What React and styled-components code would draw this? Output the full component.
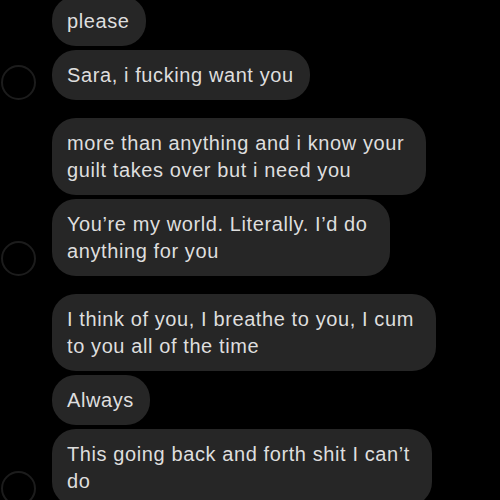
import React from "react";
import styled, { createGlobalStyle } from "styled-components";

const GlobalStyle = createGlobalStyle`
  html, body {
    margin: 0;
    padding: 0;
    background: #000;
    overflow: hidden;
  }
`;

const Thread = styled.div`
  width: 500px;
  height: 500px;
  overflow: hidden;
  background: #000;
  font-family: "Liberation Sans", Arial, sans-serif;
`;

const Inner = styled.div`
  margin-top: -4px;
  display: flex;
  flex-direction: column;
  gap: 18px;
`;

const Group = styled.div`
  display: flex;
  flex-direction: row;
  align-items: flex-end;
  gap: 16px;
`;

const Avatar = styled.div`
  width: 35px;
  height: 35px;
  flex: 0 0 35px;
  border-radius: 50%;
  border: 2px solid #1c1c1c;
  box-sizing: border-box;
  margin-left: 1px;
`;

const Stack = styled.div`
  display: flex;
  flex-direction: column;
  align-items: flex-start;
  gap: 4px;
`;

const Bubble = styled.div`
  background: #262626;
  color: #dedede;
  font-size: 20px;
  letter-spacing: 0.6px;
  line-height: 27px;
  padding: 12px ${(props) => (props.$multi ? "22px" : "16px")} 11px 15px;
  border-radius: 24px;
  white-space: nowrap;
`;

const App = () => {
  return (
    <>
      <GlobalStyle />
      <Thread>
        <Inner>
          <Group>
            <Avatar />
            <Stack>
              <Bubble>please</Bubble>
              <Bubble>Sara, i fucking want you</Bubble>
            </Stack>
          </Group>
          <Group>
            <Avatar />
            <Stack>
              <Bubble $multi>
                more than anything and i know your
                <br />
                guilt takes over but i need you
              </Bubble>
              <Bubble $multi>
                You’re my world. Literally. I’d do
                <br />
                anything for you
              </Bubble>
            </Stack>
          </Group>
          <Group>
            <Avatar />
            <Stack>
              <Bubble $multi>
                I think of you, I breathe to you, I cum
                <br />
                to you all of the time
              </Bubble>
              <Bubble>Always</Bubble>
              <Bubble $multi>
                This going back and forth shit I can’t
                <br />
                do
              </Bubble>
            </Stack>
          </Group>
        </Inner>
      </Thread>
    </>
  );
};

export default App;
